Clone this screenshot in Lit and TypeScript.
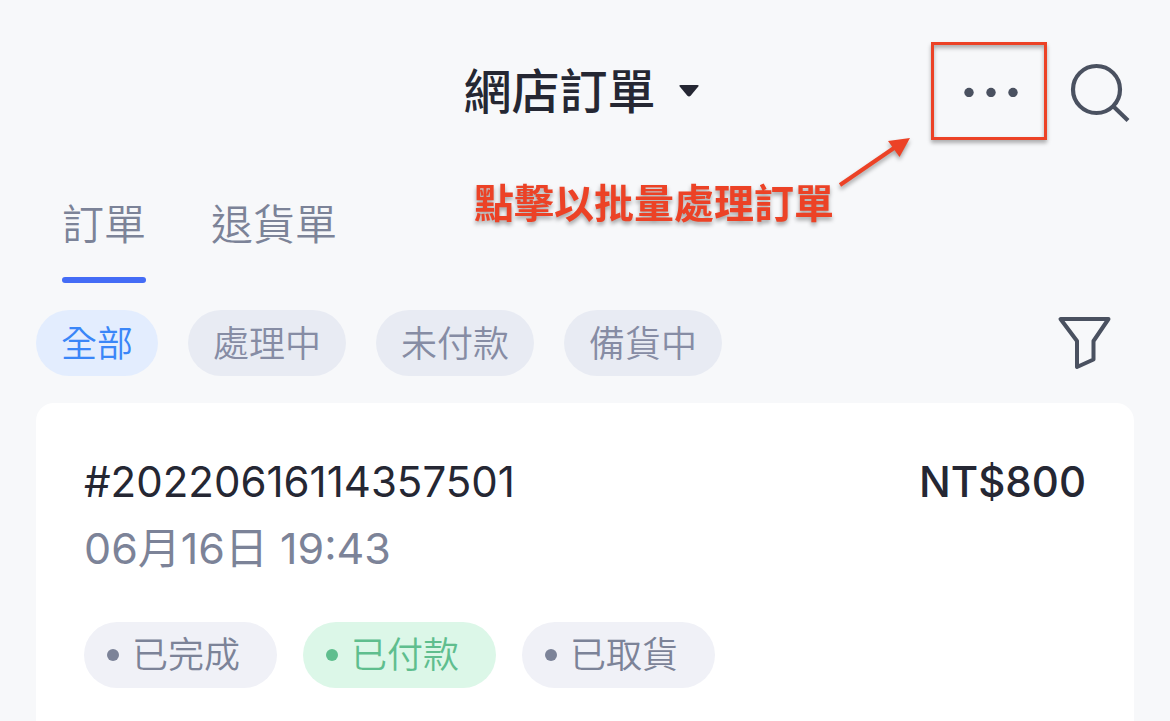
import { LitElement, html, css } from "lit";
import { customElement, property, state } from "lit/decorators.js";
import { classMap } from "lit/directives/class-map.js";

interface Status {
  label: string;
  paid?: boolean;
}

@customElement("page-header")
class PageHeader extends LitElement {
  static styles = css`
    :host {
      display: block;
    }
    .bar {
      display: grid;
      grid-template-columns: 1fr auto 1fr;
      align-items: center;
      padding: 42px 36px 0;
    }
    .title {
      grid-column: 2;
      display: grid;
      align-items: center;
      color: #252733;
    }
    .select {
      grid-area: 1 / 1;
      appearance: none;
      border: 0;
      margin: 0;
      padding: 2px 50px 0 0;
      background: transparent;
      color: inherit;
      font: inherit;
      font-size: 48px;
      line-height: 72px;
      font-weight: 500;
    }
    .caret {
      grid-area: 1 / 1;
      justify-self: end;
      width: 30px;
      height: 14px;
      pointer-events: none;
    }
    .actions {
      position: relative;
      grid-column: 3;
      justify-self: end;
      display: flex;
      align-items: center;
      gap: 20px;
    }
    .action {
      display: grid;
      place-items: center;
      margin: 0;
      padding: 0;
      border: 0;
      background: transparent;
      color: #4a5160;
    }
    .more {
      box-sizing: border-box;
      width: 116px;
      height: 98px;
      border: 3px solid #ec4226;
      box-shadow: 0 3px 4px rgba(0, 0, 0, 0.3), inset 0 3px 4px rgba(0, 0, 0, 0.3);
    }
    .icon {
      display: block;
    }
    .callout {
      position: absolute;
      top: 94px;
      right: 222px;
      display: flex;
      align-items: flex-end;
      gap: 2px;
      white-space: nowrap;
      pointer-events: none;
      color: #ec4226;
      filter: drop-shadow(0 3px 2px rgba(0, 0, 0, 0.35));
    }
    .note {
      margin: 0;
      padding-top: 38px;
      font-size: 40px;
      line-height: 60px;
      font-weight: 700;
    }
    .arrow {
      align-self: flex-start;
    }
  `;

  render() {
    return html`
      <header class="bar">
        <div class="title">
          <select class="select" aria-label="網店訂單">
            <option>網店訂單</option>
          </select>
          <svg class="caret" viewBox="0 0 30 14" aria-hidden="true">
            <path
              d="M3.500 1H20.500q2 0 .8 1.600L13.600 11.800Q12 13.200 10.400 11.800L2.700 2.600Q1.500 1 3.500 1Z"
              fill="currentColor"
            />
          </svg>
        </div>
        <div class="actions">
          <button class="action more" aria-label="點擊以批量處理訂單">
            <svg class="icon" width="60" height="12" viewBox="0 0 60 12">
              <g fill="currentColor">
                <circle cx="10" cy="7.500" r="4.700" />
                <circle cx="32" cy="7.500" r="4.700" />
                <circle cx="54" cy="7.500" r="4.700" />
              </g>
            </svg>
          </button>
          <button class="action" aria-label="search">
            <svg class="icon" width="67" height="64" viewBox="0 0 67 64">
              <g fill="none" stroke="currentColor" stroke-width="4.200">
                <circle cx="29.500" cy="30.500" r="23.500" />
                <path d="M46.500 47.500L61 61.500" />
              </g>
            </svg>
          </button>
          <div class="callout">
            <p class="note">點擊以批量處理訂單</p>
            <svg class="arrow" width="76" height="54" viewBox="0 0 76 54" aria-hidden="true">
              <path d="M4 49L58 12" fill="none" stroke="currentColor" stroke-width="4" />
              <path d="M74 2L52 5L63.500 21Z" fill="currentColor" />
            </svg>
          </div>
        </div>
      </header>
    `;
  }
}

@customElement("order-card")
class OrderCard extends LitElement {
  @property() number = "";
  @property() time = "";
  @property() total = "";
  @property({ attribute: false }) statuses: Status[] = [];

  static styles = css`
    :host {
      display: block;
      background: #fff;
      border-radius: 18px 18px 0 0;
    }
    .card {
      padding: 47px 48px 32px;
    }
    .row {
      display: flex;
      align-items: baseline;
      justify-content: space-between;
      color: #252733;
      font-size: 42px;
      line-height: 64px;
    }
    .number {
      margin: 0;
      font-size: inherit;
      font-weight: 400;
    }
    .total {
      font-weight: 500;
    }
    .time {
      display: block;
      padding-top: 2px;
      color: #7c8398;
      font-size: 43px;
      line-height: 64px;
      font-weight: 400;
    }
    .statuses {
      display: flex;
      gap: 26px;
      margin: 0;
      padding: 42px 0 0;
      list-style: none;
    }
    .status {
      display: flex;
      align-items: center;
      gap: 13px;
      padding: 0 37px 0 23px;
      border-radius: 33px;
      background: #f0f1f7;
      color: #7c8398;
      font-size: 36px;
      line-height: 66px;
      font-weight: 350;
    }
    .status::before {
      content: "";
      width: 12px;
      height: 12px;
      border-radius: 50%;
      background: currentColor;
    }
    .paid {
      background: #dcf7e8;
      color: #5fbe8e;
    }
  `;

  render() {
    return html`
      <article class="card">
        <div class="row">
          <h2 class="number">${this.number}</h2>
          <span class="total">${this.total}</span>
        </div>
        <time class="time">${this.time}</time>
        <ul class="statuses">
          ${this.statuses.map(
            (s) => html`<li class=${classMap({ status: true, paid: !!s.paid })}>${s.label}</li>`
          )}
        </ul>
      </article>
    `;
  }
}

@customElement("app-root")
class AppRoot extends LitElement {
  @state() private tab = 0;
  @state() private filter = 0;

  private tabs = ["訂單", "退貨單"];
  private filters = ["全部", "處理中", "未付款", "備貨中"];
  private statuses: Status[] = [
    { label: "已完成" },
    { label: "已付款", paid: true },
    { label: "已取貨" },
  ];

  static styles = css`
    :host {
      display: flex;
      flex-direction: column;
      box-sizing: border-box;
      min-height: 100vh;
      background: #f7f8fa;
      font-family: Inter, "Noto Sans CJK TC", sans-serif;
    }
    .tabs {
      display: flex;
      gap: 65px;
      padding: 53px 62px 0;
    }
    .tab {
      margin: 0;
      padding: 0;
      border: 0;
      background: transparent;
      color: #7c8398;
      font-family: inherit;
      font-size: 42px;
      line-height: 64px;
      font-weight: 350;
    }
    .tab::after {
      content: "";
      display: block;
      height: 6px;
      margin-top: 20px;
      border-radius: 3px;
    }
    .current::after {
      background: #446cf6;
    }
    .filters {
      display: flex;
      align-items: center;
      gap: 30px;
      padding: 27px 36px;
    }
    .chip {
      margin: 0;
      padding: 2px 25px 0;
      border: 0;
      border-radius: 33px;
      background: #e8ebf3;
      color: #868ca4;
      font-family: inherit;
      font-size: 36px;
      line-height: 64px;
      font-weight: 350;
    }
    .chosen {
      background: #e3edfe;
      color: #3a86f8;
    }
    .funnel {
      margin: 0 20px 0 auto;
      padding: 0;
      border: 0;
      background: transparent;
      color: #4a5160;
    }
    .icon {
      display: block;
    }
    .order {
      flex: 1;
      margin: 0 36px;
    }
  `;

  render() {
    return html`
      <page-header></page-header>
      <nav class="tabs" role="tablist">
        ${this.tabs.map(
          (t, i) => html`<button
            role="tab"
            aria-selected=${i === this.tab}
            class=${classMap({ tab: true, current: i === this.tab })}
            @click=${() => (this.tab = i)}
          >${t}</button>`
        )}
      </nav>
      <div class="filters">
        ${this.filters.map(
          (f, i) => html`<button
            aria-pressed=${i === this.filter}
            class=${classMap({ chip: true, chosen: i === this.filter })}
            @click=${() => (this.filter = i)}
          >${f}</button>`
        )}
        <button class="funnel" aria-label="filter">
          <svg class="icon" width="58" height="58" viewBox="0 0 58 58">
            <path
              d="M4.500 5H52.500L37.500 27V45.500L21 53V27Z"
              fill="none"
              stroke="currentColor"
              stroke-width="4"
              stroke-linejoin="round"
            />
          </svg>
        </button>
      </div>
      <order-card
        class="order"
        number="#20220616114357501"
        time="06月16日 19:43"
        total="NT$800"
        .statuses=${this.statuses}
      ></order-card>
    `;
  }
}
